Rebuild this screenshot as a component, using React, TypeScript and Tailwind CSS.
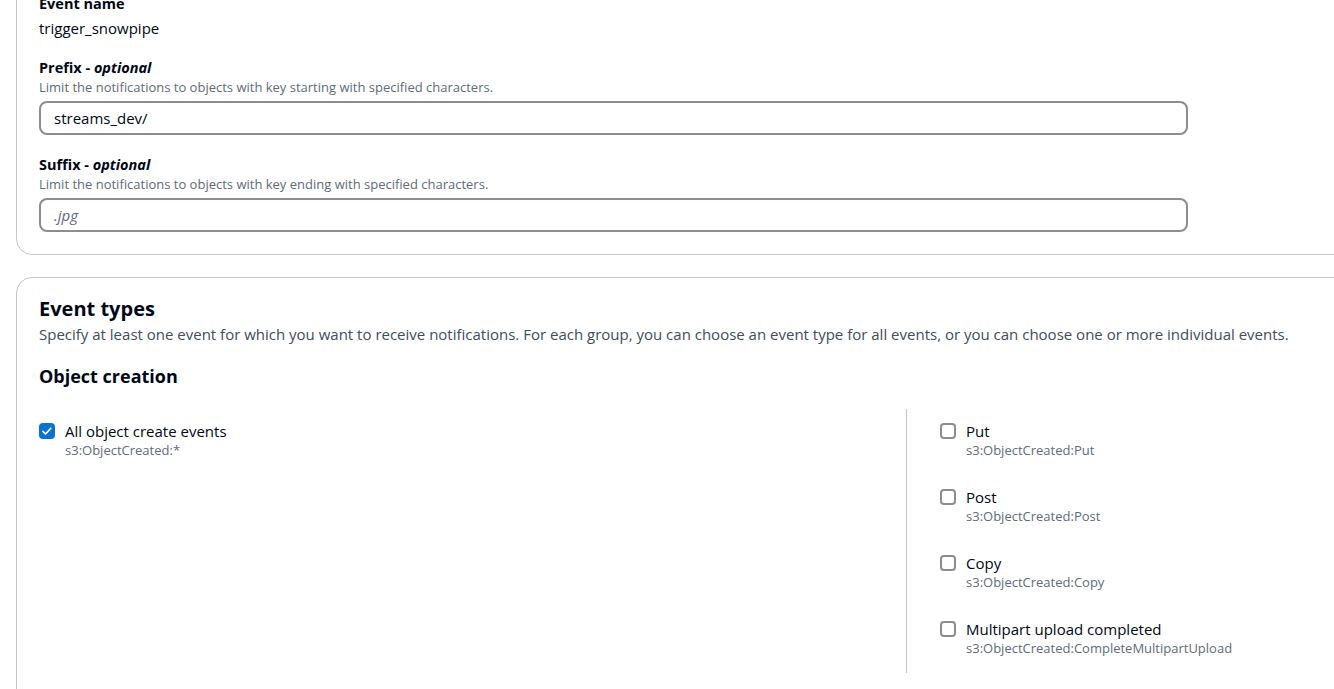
import React from 'react'

function Checkbox({ checked }: { checked?: boolean }) {
  if (checked) {
    return (
      <span className="mt-[3px] flex h-4 w-4 shrink-0 items-center justify-center rounded-[4px] bg-[#0972d3]">
        <svg viewBox="0 0 16 16" className="h-3 w-3" fill="none">
          <path d="M2.5 8.5l3.5 3.5 7-7.5" stroke="white" strokeWidth="2.2" strokeLinecap="round" strokeLinejoin="round" />
        </svg>
      </span>
    )
  }
  return <span className="mt-[3px] h-4 w-4 shrink-0 rounded-[4px] border-2 border-[#8c8c94] bg-white" />
}

function EventOption({ label, code, checked }: { label: string; code: string; checked?: boolean }) {
  return (
    <div className="flex gap-[10px]">
      <Checkbox checked={checked} />
      <div>
        <div className="text-[15px] leading-[22px] text-[#000716]">{label}</div>
        <div className="text-[13px] leading-[16px] text-[#5f6b7a]">{code}</div>
      </div>
    </div>
  )
}

function Field({ label, hint, value, placeholder }: { label: string; hint: string; value?: string; placeholder?: string }) {
  return (
    <div>
      <div className="text-[14.5px] font-bold leading-[22px] text-[#000716]">
        {label} - <i>optional</i>
      </div>
      <div className="text-[13px] leading-[16px] text-[#5f6b7a]">{hint}</div>
      <input
        readOnly
        defaultValue={value}
        placeholder={placeholder}
        className="mt-[6px] h-[34px] w-[1149px] rounded-[8px] border-2 border-[#8c8c94] bg-white px-[13px] text-[15px] text-[#000716] outline-none placeholder:italic placeholder:text-[#5f6b7a]"
      />
    </div>
  )
}

export default function App() {
  const right = [
    { label: 'Put', code: 's3:ObjectCreated:Put' },
    { label: 'Post', code: 's3:ObjectCreated:Post' },
    { label: 'Copy', code: 's3:ObjectCreated:Copy' },
    { label: 'Multipart upload completed', code: 's3:ObjectCreated:CompleteMultipartUpload' },
  ]

  return (
    <div className="h-[689px] overflow-hidden bg-white pl-4 font-['Open_Sans',sans-serif]">
      <div className="-mt-[28px] mr-[-20px] rounded-b-[16px] border border-[#c6c6cd] px-[22px] pb-[22px] pt-[22px]">
        <div className="-mt-[2px] mb-[2px] text-[14.5px] font-bold leading-[22px] text-[#000716]">Event name</div>
        <div className="text-[15px] leading-[22px] text-[#000716]">trigger_snowpipe</div>

        <div className="mt-[18px]">
          <Field label="Prefix" hint="Limit the notifications to objects with key starting with specified characters." value="streams_dev/" />
        </div>
        <div className="mt-[19px]">
          <Field label="Suffix" hint="Limit the notifications to objects with key ending with specified characters." placeholder=".jpg" />
        </div>
      </div>

      <div className="mt-[22px] mr-[-20px] rounded-t-[16px] border border-[#c6c6cd] px-[22px] pt-[19px] pb-10">
        <h2 className="text-[20px] font-bold leading-[24px] text-[#000716]">Event types</h2>
        <p className="mt-[2px] text-[15px] leading-[22px] text-[#414d5c]">
          Specify at least one event for which you want to receive notifications. For each group, you can choose an event type for all events, or you can choose one or more individual events.
        </p>
        <h3 className="mt-[20px] text-[18px] font-bold leading-[22px] text-[#000716]">Object creation</h3>

        <div className="mt-[22px] grid grid-cols-[867px_1fr]">
          <div className="pt-[11px]">
            <EventOption label="All object create events" code="s3:ObjectCreated:*" checked />
          </div>
          <div className="flex flex-col gap-[28px] border-l border-[#c6c6cd] pl-[33px] pt-[11px] pb-[17px]">
            {right.map((r) => (
              <EventOption key={r.label} label={r.label} code={r.code} />
            ))}
          </div>
        </div>
      </div>
    </div>
  )
}
